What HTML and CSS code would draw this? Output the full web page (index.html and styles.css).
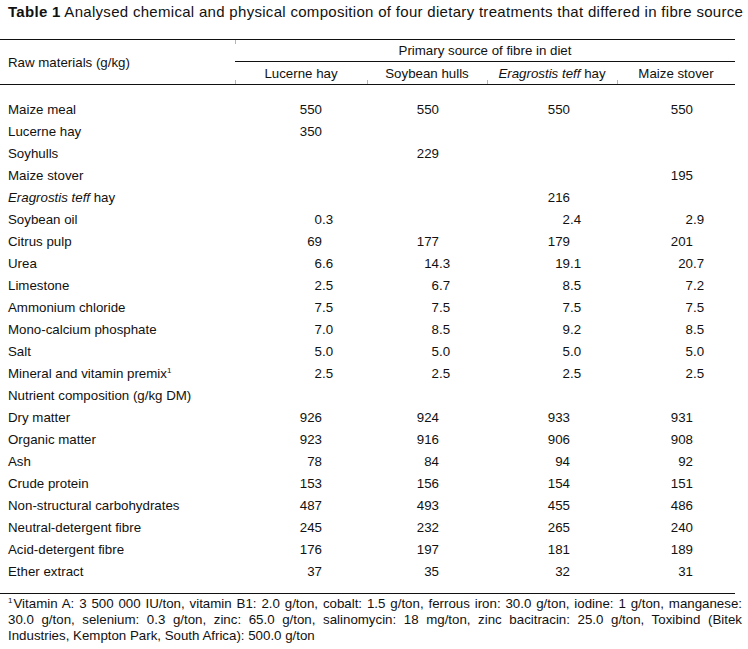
FILE: index.html
```html
<!DOCTYPE html>
<html>
<head>
<meta charset="utf-8">
<link rel="stylesheet" href="styles.css">
</head>
<body>
<div class="page">
  <p class="title"><b>Table 1</b> Analysed chemical and physical composition of four dietary treatments that differed in fibre source</p>
  <table class="t">
    <colgroup><col class="c0"><col class="c1"><col class="c2"><col class="c3"><col class="c4"></colgroup>
    <thead>
      <tr class="h1">
        <th rowspan="2" class="lab">Raw materials (g/kg)</th>
        <th colspan="4" class="span tick">Primary source of fibre in diet</th>
      </tr>
      <tr class="h2">
        <th class="tick">Lucerne hay</th>
        <th class="tick">Soybean hulls</th>
        <th class="tick"><i>Eragrostis teff</i> hay</th>
        <th class="tick">Maize stover</th>
      </tr>
    </thead>
    <tbody>
      <tr class="first"><td>Maize meal</td><td><span class="i">550</span></td><td><span class="i">550</span></td><td><span class="i">550</span></td><td><span class="i">550</span></td></tr>
      <tr><td>Lucerne hay</td><td><span class="i">350</span></td><td></td><td></td><td></td></tr>
      <tr><td>Soyhulls</td><td></td><td><span class="i">229</span></td><td></td><td></td></tr>
      <tr><td>Maize stover</td><td></td><td></td><td></td><td><span class="i">195</span></td></tr>
      <tr><td><i>Eragrostis teff</i> hay</td><td></td><td></td><td><span class="i">216</span></td><td></td></tr>
      <tr><td>Soybean oil</td><td><span class="i">0</span><span class="f">.3</span></td><td></td><td><span class="i">2</span><span class="f">.4</span></td><td><span class="i">2</span><span class="f">.9</span></td></tr>
      <tr><td>Citrus pulp</td><td><span class="i">69</span></td><td><span class="i">177</span></td><td><span class="i">179</span></td><td><span class="i">201</span></td></tr>
      <tr><td>Urea</td><td><span class="i">6</span><span class="f">.6</span></td><td><span class="i">14</span><span class="f">.3</span></td><td><span class="i">19</span><span class="f">.1</span></td><td><span class="i">20</span><span class="f">.7</span></td></tr>
      <tr><td>Limestone</td><td><span class="i">2</span><span class="f">.5</span></td><td><span class="i">6</span><span class="f">.7</span></td><td><span class="i">8</span><span class="f">.5</span></td><td><span class="i">7</span><span class="f">.2</span></td></tr>
      <tr><td>Ammonium chloride</td><td><span class="i">7</span><span class="f">.5</span></td><td><span class="i">7</span><span class="f">.5</span></td><td><span class="i">7</span><span class="f">.5</span></td><td><span class="i">7</span><span class="f">.5</span></td></tr>
      <tr><td>Mono-calcium phosphate</td><td><span class="i">7</span><span class="f">.0</span></td><td><span class="i">8</span><span class="f">.5</span></td><td><span class="i">9</span><span class="f">.2</span></td><td><span class="i">8</span><span class="f">.5</span></td></tr>
      <tr><td>Salt</td><td><span class="i">5</span><span class="f">.0</span></td><td><span class="i">5</span><span class="f">.0</span></td><td><span class="i">5</span><span class="f">.0</span></td><td><span class="i">5</span><span class="f">.0</span></td></tr>
      <tr><td>Mineral and vitamin premix<sup class="sp">1</sup></td><td><span class="i">2</span><span class="f">.5</span></td><td><span class="i">2</span><span class="f">.5</span></td><td><span class="i">2</span><span class="f">.5</span></td><td><span class="i">2</span><span class="f">.5</span></td></tr>
      <tr><td colspan="5">Nutrient composition (g/kg DM)</td></tr>
      <tr><td>Dry matter</td><td><span class="i">926</span></td><td><span class="i">924</span></td><td><span class="i">933</span></td><td><span class="i">931</span></td></tr>
      <tr><td>Organic matter</td><td><span class="i">923</span></td><td><span class="i">916</span></td><td><span class="i">906</span></td><td><span class="i">908</span></td></tr>
      <tr><td>Ash</td><td><span class="i">78</span></td><td><span class="i">84</span></td><td><span class="i">94</span></td><td><span class="i">92</span></td></tr>
      <tr><td>Crude protein</td><td><span class="i">153</span></td><td><span class="i">156</span></td><td><span class="i">154</span></td><td><span class="i">151</span></td></tr>
      <tr><td>Non-structural carbohydrates</td><td><span class="i">487</span></td><td><span class="i">493</span></td><td><span class="i">455</span></td><td><span class="i">486</span></td></tr>
      <tr><td>Neutral-detergent fibre</td><td><span class="i">245</span></td><td><span class="i">232</span></td><td><span class="i">265</span></td><td><span class="i">240</span></td></tr>
      <tr><td>Acid-detergent fibre</td><td><span class="i">176</span></td><td><span class="i">197</span></td><td><span class="i">181</span></td><td><span class="i">189</span></td></tr>
      <tr class="last"><td>Ether extract</td><td><span class="i">37</span></td><td><span class="i">35</span></td><td><span class="i">32</span></td><td><span class="i">31</span></td></tr>
    </tbody>
  </table>
  <p class="note"><sup class="sp fn">1</sup>Vitamin A: 3 500 000 IU/ton, vitamin B1: 2.0 g/ton, cobalt: 1.5 g/ton, ferrous iron: 30.0 g/ton, iodine: 1 g/ton, manganese: 30.0 g/ton, selenium: 0.3 g/ton, zinc: 65.0 g/ton, salinomycin: 18 mg/ton, zinc bacitracin: 25.0 g/ton, Toxibind (Bitek Industries, Kempton Park, South Africa): 500.0 g/ton</p>
</div>
</body>
</html>
```

FILE: styles.css
```css
html, body {
  margin: 0;
  padding: 0;
  background: #fff;
}
body {
  font-family: "Liberation Sans", Arial, sans-serif;
  font-size: 13.3px;
  color: #111;
}
.page {
  width: 748px;
}
.title {
  margin: 0;
  padding: 4px 0 0 8px;
  height: 39px;
  box-sizing: border-box;
  font-size: 15px;
  letter-spacing: 0.3px;
  line-height: 16px;
  white-space: nowrap;
}
.t {
  border-collapse: collapse;
  table-layout: fixed;
  width: 735px;
}
.c0 { width: 235px; }
.c1 { width: 132px; }
.c2 { width: 120px; }
.c3 { width: 130px; }
.c4 { width: 118px; }
.t th, .t td {
  padding: 0;
  font-weight: normal;
  white-space: nowrap;
}
.t thead tr.h1 th {
  border-top: 1px solid #111;
  height: 21px;
}
.t th.lab {
  text-align: left;
  padding-left: 8px;
  border-bottom: 1px solid #111;
  vertical-align: middle;
}
.t th.span {
  border-bottom: 1px solid #111;
  text-align: center;
}
.t tr.h2 th {
  height: 22px;
  text-align: center;
  border-bottom: 1px solid #111;
  vertical-align: middle;
}
.tick {
  background: linear-gradient(#b5b5b5, #b5b5b5) left bottom / 1px 4px no-repeat;
}
.t tr.h1 th.tick {
  background-position: left top;
}
.t td {
  height: 22px;
  line-height: 22px;
  vertical-align: middle;
}
.t td:first-child {
  padding-left: 8px;
}
.t tr.first td {
  padding-top: 14px;
}
.t tr.last td {
  padding-bottom: 10px;
  border-bottom: 1px solid #111;
}
.t td:nth-child(2) { padding-left: 47px; }
.t td:nth-child(3) { padding-left: 32px; }
.t td:nth-child(4) { padding-left: 43px; }
.t td:nth-child(5) { padding-left: 36px; }
.i {
  display: inline-block;
  width: 40px;
  text-align: right;
}
.f {
  display: inline-block;
}
.sp {
  display: inline-block;
  font-size: 8px;
  line-height: 8px;
  vertical-align: 5px;
}
.fn {
  margin-right: 1px;
}
.note {
  margin: 0;
  padding: 2px 6px 0 8px;
  line-height: 16px;
  text-align: justify;
  font-size: 13.3px;
}
```
